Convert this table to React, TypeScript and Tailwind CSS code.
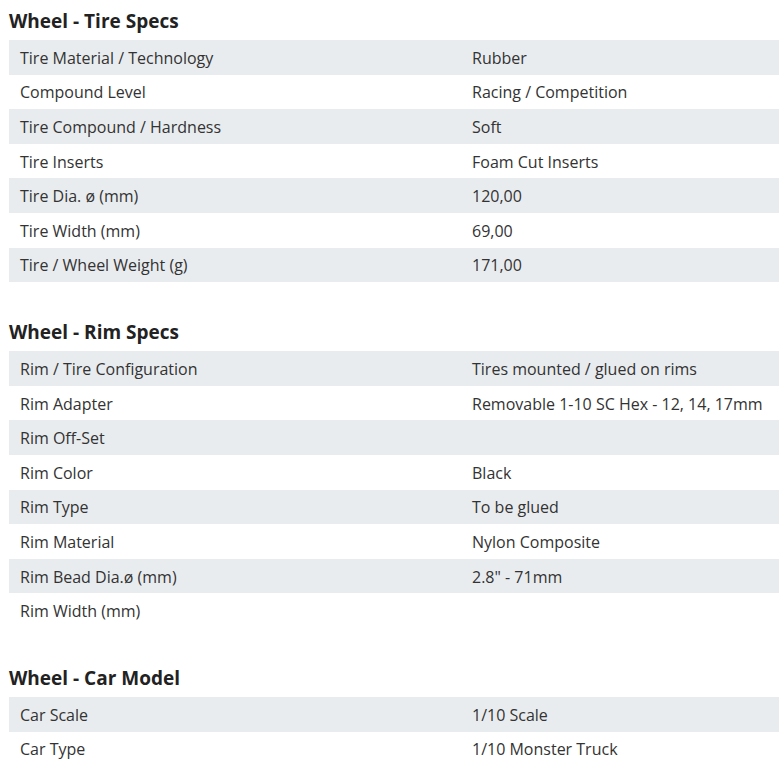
const SECTIONS = [
  {
    title: 'Wheel - Tire Specs',
    rows: [
      ['Tire Material / Technology', 'Rubber'],
      ['Compound Level', 'Racing / Competition'],
      ['Tire Compound / Hardness', 'Soft'],
      ['Tire Inserts', 'Foam Cut Inserts'],
      ['Tire Dia. ø (mm)', '120,00'],
      ['Tire Width (mm)', '69,00'],
      ['Tire / Wheel Weight (g)', '171,00'],
    ],
  },
  {
    title: 'Wheel - Rim Specs',
    rows: [
      ['Rim / Tire Configuration', 'Tires mounted / glued on rims'],
      ['Rim Adapter', 'Removable 1-10 SC Hex - 12, 14, 17mm'],
      ['Rim Off-Set', ''],
      ['Rim Color', 'Black'],
      ['Rim Type', 'To be glued'],
      ['Rim Material', 'Nylon Composite'],
      ['Rim Bead Dia.ø (mm)', '2.8" - 71mm'],
      ['Rim Width (mm)', ''],
    ],
  },
  {
    title: 'Wheel - Car Model',
    rows: [
      ['Car Scale', '1/10 Scale'],
      ['Car Type', '1/10 Monster Truck'],
    ],
  },
]

export default function App() {
  return (
    <div className="w-[779px] bg-white pl-[9px] pt-[7px] font-['Open_Sans',sans-serif] text-[#333]">
      {SECTIONS.map((s, i) => (
        <div key={s.title} className={i > 0 ? 'mt-[36px]' : ''}>
          <h3 className="pb-[5px] text-[19px] font-bold leading-[28px] text-[#222]">{s.title}</h3>
          <div className="flex flex-col">
            {s.rows.map(([label, value], j) => (
              <div
                key={label}
                className={`grid h-[34.6px] grid-cols-[463px_1fr] items-center pt-px text-[16px] ${
                  j % 2 === 0 ? 'bg-[#e9ecef]' : 'bg-white'
                }`}
              >
                <span className="pl-[11px]">{label}</span>
                <span>{value}</span>
              </div>
            ))}
          </div>
        </div>
      ))}
    </div>
  )
}
